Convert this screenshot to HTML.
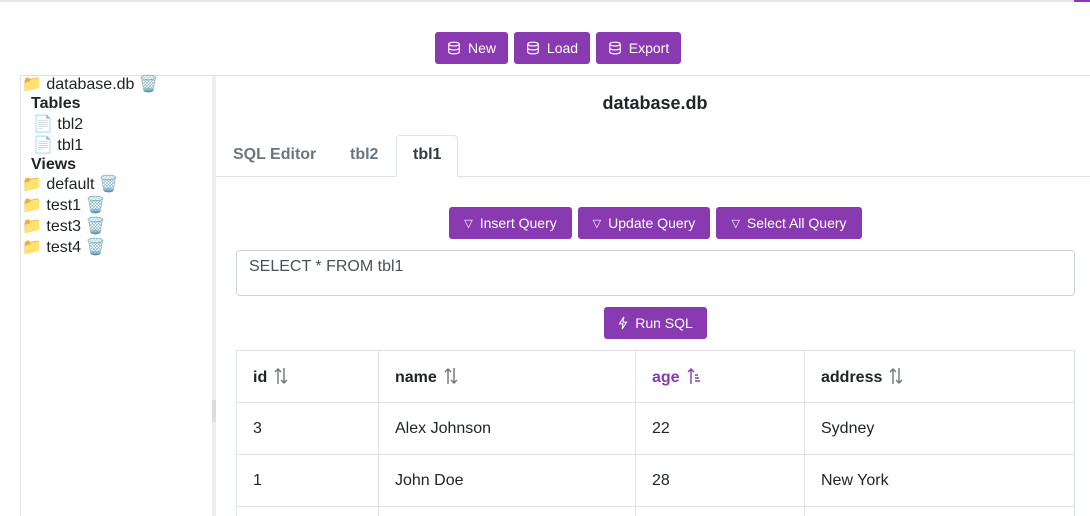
<!DOCTYPE html>
<html><head><meta charset="utf-8"><style>
*{box-sizing:border-box;margin:0;padding:0}
html,body{width:1090px;height:516px;overflow:hidden}
body{background:#fff;font-family:"Liberation Sans",sans-serif;color:#212529;position:relative}
.a{position:absolute}
.btn{position:absolute;background:#8a3ab0;color:#fff;border-radius:3px;font-size:14px;display:flex;align-items:center;justify-content:center;gap:7px;height:32px}
.side{font-size:16px}
.side div{position:absolute;white-space:nowrap;line-height:20px}
.tab{position:absolute;font-size:16px;font-weight:bold;color:#6c757d;top:146px}
table{position:absolute;left:236px;top:350px;width:839px;border-collapse:collapse;font-size:16px}
td,th{border:1px solid #dee2e6;height:52px;padding:0 16px;text-align:left;line-height:18px}
th{font-weight:bold}
.s{vertical-align:-3px;margin-left:6px}
</style></head><body>
<div class="a" style="left:0;top:0;width:1090px;height:2px;background:#e5e5e5"></div>
<div class="a" style="left:1074px;top:0;width:16px;height:2px;background:#8a3ab0"></div>

<div class="btn" style="left:435px;top:32px;width:73px"><svg width="14" height="14" viewBox="0 0 16 16" fill="none" stroke="#fff" stroke-width="1.3"><ellipse cx="8" cy="3.5" rx="6" ry="2.2"/><path d="M2 3.5v9c0 1.2 2.7 2.2 6 2.2s6-1 6-2.2v-9M2 8c0 1.2 2.7 2.2 6 2.2s6-1 6-2.2"/></svg>New</div>
<div class="btn" style="left:514px;top:32px;width:76px"><svg width="14" height="14" viewBox="0 0 16 16" fill="none" stroke="#fff" stroke-width="1.3"><ellipse cx="8" cy="3.5" rx="6" ry="2.2"/><path d="M2 3.5v9c0 1.2 2.7 2.2 6 2.2s6-1 6-2.2v-9M2 8c0 1.2 2.7 2.2 6 2.2s6-1 6-2.2"/></svg>Load</div>
<div class="btn" style="left:596px;top:32px;width:85px"><svg width="14" height="14" viewBox="0 0 16 16" fill="none" stroke="#fff" stroke-width="1.3"><ellipse cx="8" cy="3.5" rx="6" ry="2.2"/><path d="M2 3.5v9c0 1.2 2.7 2.2 6 2.2s6-1 6-2.2v-9M2 8c0 1.2 2.7 2.2 6 2.2s6-1 6-2.2"/></svg>Export</div>

<div class="a" style="left:20px;top:75px;width:1070px;height:1px;background:#dee2e6"></div>
<div class="a" style="left:20px;top:75px;width:1px;height:441px;background:#dee2e6"></div>
<div class="a" style="left:212px;top:76px;width:4px;height:440px;background:#eee"></div>
<div class="a" style="left:212px;top:400px;width:4px;height:22px;background:#ddd"></div>

<div class="side">
<div style="left:22px;top:75px">📁 database.db 🗑️</div>
<div style="left:31px;top:94px;font-weight:bold">Tables</div>
<div style="left:33px;top:115px">📄 tbl2</div>
<div style="left:33px;top:136px">📄 tbl1</div>
<div style="left:31px;top:155px;font-weight:bold">Views</div>
<div style="left:22px;top:175px">📁 default 🗑️</div>
<div style="left:22px;top:196px">📁 test1 🗑️</div>
<div style="left:22px;top:217px">📁 test3 🗑️</div>
<div style="left:22px;top:238px">📁 test4 🗑️</div>
</div>

<div class="a" style="left:218px;top:93px;width:874px;text-align:center;font-size:18px;font-weight:bold;color:#212529">database.db</div>

<div class="a" style="left:216px;top:176px;width:874px;height:1px;background:#dee2e6"></div>
<div class="a" style="left:396px;top:135px;width:62px;height:42px;border:1px solid #dee2e6;border-bottom:none;border-radius:4px 4px 0 0;background:#fff"></div>
<div class="tab" style="left:233px">SQL Editor</div>
<div class="tab" style="left:350px">tbl2</div>
<div class="tab" style="left:413px;color:#343a40">tbl1</div>

<div class="btn" style="left:449px;top:207px;width:123px"><span style="font-size:11px">▽</span>Insert Query</div>
<div class="btn" style="left:578px;top:207px;width:132px"><span style="font-size:11px">▽</span>Update Query</div>
<div class="btn" style="left:716px;top:207px;width:146px"><span style="font-size:11px">▽</span>Select All Query</div>

<div class="a" style="left:236px;top:250px;width:839px;height:46px;border:1px solid #ced4da;border-radius:4px;padding:7px 12px;font-size:16px;color:#495057">SELECT * FROM tbl1</div>

<div class="btn" style="left:604px;top:307px;width:103px"><svg width="10" height="14" viewBox="0 0 10 16" fill="none" stroke="#fff" stroke-width="1.2"><path d="M6 1L1 9h4l-1 6 5-8H5z"/></svg>Run SQL</div>

<table>
<tr><th style="width:142px">id<svg class="s" width="16" height="18" viewBox="0 0 16 18" fill="none" stroke="#6c757d" stroke-width="1.4"><path d="M5 17V2M2 5l3-3 3 3M11 1v15M8 13l3 3 3-3"/></svg></th><th style="width:257px">name<svg class="s" width="16" height="18" viewBox="0 0 16 18" fill="none" stroke="#6c757d" stroke-width="1.4"><path d="M5 17V2M2 5l3-3 3 3M11 1v15M8 13l3 3 3-3"/></svg></th><th style="width:169px;color:#8a3ab0">age<svg class="s" width="16" height="18" viewBox="0 0 16 18" fill="none" stroke="#8a3ab0" stroke-width="1.4"><path d="M5 17V2M2 5l3-3 3 3M9 8h3M9 11h4M9 14h5"/></svg></th><th>address<svg class="s" width="16" height="18" viewBox="0 0 16 18" fill="none" stroke="#6c757d" stroke-width="1.4"><path d="M5 17V2M2 5l3-3 3 3M11 1v15M8 13l3 3 3-3"/></svg></th></tr>
<tr><td>3</td><td>Alex Johnson</td><td>22</td><td>Sydney</td></tr>
<tr><td>1</td><td>John Doe</td><td>28</td><td>New York</td></tr>
<tr><td style="height:10px;border-bottom:none"></td><td style="height:10px;border-bottom:none"></td><td style="height:10px;border-bottom:none"></td><td style="height:10px;border-bottom:none"></td></tr>
</table>
</body></html>
